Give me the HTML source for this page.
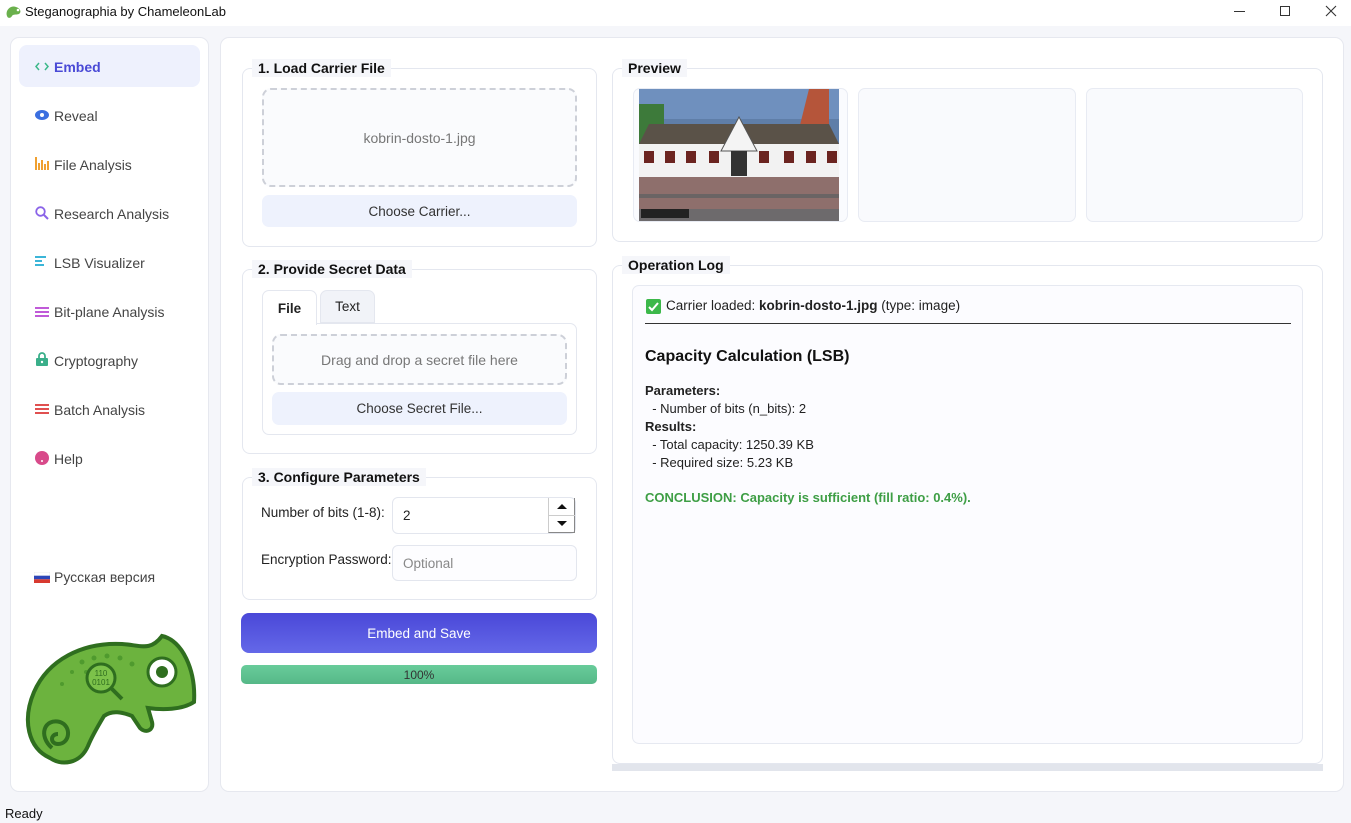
<!DOCTYPE html>
<html><head><meta charset="utf-8"><style>
*{box-sizing:border-box;margin:0;padding:0}
body{width:1351px;height:823px;background:#f5f6fa;font-family:"Segoe UI","Liberation Sans",sans-serif;font-size:13px;color:#222;position:relative;overflow:hidden}
.a{position:absolute}
.card{background:#fff;border:1px solid #e6e8ef;border-radius:9px}
.grp{border:1px solid #e4e7ef;border-radius:8px;background:#fff}
.gt{position:absolute;background:#f5f6fa;font-weight:bold;font-size:14px;padding:0 6px;line-height:18px;color:#111}
.nav{position:absolute;left:54px;font-size:14px;color:#444;line-height:20px}
.ic{position:absolute;left:35px}
.dz{border:2px dashed #cdd0d8;border-radius:9px;background:#fafbfd;color:#777;display:flex;align-items:center;justify-content:center;font-size:14px}
.btn{background:#eef2fd;border-radius:7px;display:flex;align-items:center;justify-content:center;font-size:13.5px;color:#333}
.inp{border:1px solid #e3e6ee;border-radius:6px;background:#fff;font-size:13.5px;display:flex;align-items:center;padding-left:10px}
</style></head><body>
<div class="a" style="left:0;top:0;width:1351px;height:26px;background:#fff"></div>
<svg class="a" style="left:5px;top:4px" width="17" height="15" viewBox="0 0 17 15"><path d="M2 12 C0 6 6 1 11 3 C15 4 17 8 14 10 C11 11 8 10 7 12 C6 14 3 15 2 12Z" fill="#6ab04c"/><circle cx="13" cy="6" r="1.3" fill="#fff"/></svg>
<div class="a" style="left:25px;top:4px;font-size:13px;color:#111">Steganographia by ChameleonLab</div>
<div class="a" style="left:1234px;top:11px;width:11px;height:1px;background:#333"></div>
<div class="a" style="left:1280px;top:6px;width:10px;height:10px;border:1px solid #333"></div>
<svg class="a" style="left:1325px;top:5px" width="12" height="12"><path d="M1 1L11 11M11 1L1 11" stroke="#333" stroke-width="1.1"/></svg>

<div class="a card" style="left:10px;top:37px;width:199px;height:755px"></div>
<div class="a" style="left:19px;top:45px;width:181px;height:42px;background:#eef1fd;border-radius:8px"></div>
<svg class="ic" style="top:62px" width="14" height="9"><path d="M4 1L1 4.5L4 8M10 1L13 4.5L10 8" fill="none" stroke="#3cb88a" stroke-width="1.5"/></svg>
<div class="nav" style="top:57px;color:#4a4ad6;font-weight:bold">Embed</div>
<svg class="ic" style="top:110px" width="14" height="10"><ellipse cx="7" cy="5" rx="7" ry="5" fill="#3b6fe0"/><circle cx="7" cy="5" r="2" fill="#fff"/></svg>
<div class="nav" style="top:106px">Reveal</div>
<svg class="ic" style="top:157px" width="14" height="13"><g fill="#f0a030"><rect x="0" y="0" width="2" height="13"/><rect x="3" y="6" width="2" height="7"/><rect x="6" y="3" width="2" height="10"/><rect x="9" y="7" width="2" height="6"/><rect x="12" y="4" width="2" height="9"/></g></svg>
<div class="nav" style="top:155px">File Analysis</div>
<svg class="ic" style="top:206px" width="14" height="14"><circle cx="5.5" cy="5.5" r="4.3" fill="none" stroke="#8a63e8" stroke-width="1.8"/><path d="M8.5 8.5L13 13" stroke="#8a63e8" stroke-width="2"/></svg>
<div class="nav" style="top:204px">Research Analysis</div>
<svg class="ic" style="top:256px" width="12" height="12"><g fill="#3bb5d8"><rect x="0" y="0" width="11" height="2"/><rect x="0" y="4" width="7" height="2"/><rect x="0" y="8" width="9" height="2"/></g></svg>
<div class="nav" style="top:253px">LSB Visualizer</div>
<svg class="ic" style="top:307px" width="14" height="10"><g fill="#c05ad8"><rect y="0" width="14" height="2"/><rect y="4" width="14" height="2"/><rect y="8" width="14" height="2"/></g></svg>
<div class="nav" style="top:302px">Bit-plane Analysis</div>
<svg class="ic" style="top:352px;left:36px" width="12" height="14"><path d="M3 6V4a3 3 0 0 1 6 0v2" fill="none" stroke="#3aaf8a" stroke-width="1.8"/><rect x="0" y="6" width="12" height="8" rx="1" fill="#3aaf8a"/><circle cx="6" cy="10" r="1.2" fill="#fff"/></svg>
<div class="nav" style="top:351px">Cryptography</div>
<svg class="ic" style="top:404px" width="14" height="10"><g fill="#e05050"><rect y="0" width="14" height="2"/><rect y="4" width="14" height="2"/><rect y="8" width="14" height="2"/></g></svg>
<div class="nav" style="top:400px">Batch Analysis</div>
<svg class="ic" style="top:451px" width="14" height="14"><circle cx="7" cy="7" r="7" fill="#d84a8a"/><circle cx="7" cy="10" r="1" fill="#fff"/></svg>
<div class="nav" style="top:449px">Help</div>
<svg class="a" style="left:34px;top:572px" width="16" height="11"><rect width="16" height="4" fill="#fff" stroke="#ddd" stroke-width=".5"/><rect y="3.7" width="16" height="3.6" fill="#2d46b8"/><rect y="7.3" width="16" height="3.7" fill="#d83a30"/></svg>
<div class="nav" style="top:567px">Русская версия</div>
<svg class="a" style="left:22px;top:630px" width="176" height="136" viewBox="0 0 176 136">
<path d="M28 128 C6 118 0 90 12 62 C26 30 60 12 100 14 C118 15 128 22 140 6 C160 10 174 40 172 72 C160 80 140 80 126 78 L130 92 C132 100 124 104 118 98 L110 86 C100 82 90 80 82 86 C76 96 70 106 66 116 C58 134 40 136 28 128Z" fill="#6cb33e" stroke="#2f6e1f" stroke-width="4"/>
<path d="M30 118 C16 106 22 88 38 92 C50 96 48 114 36 114 C28 114 28 104 36 104" fill="none" stroke="#2f6e1f" stroke-width="4"/>
<g fill="#4f9a2e"><circle cx="60" cy="32" r="2.5"/><circle cx="72" cy="28" r="2.5"/><circle cx="85" cy="26" r="2.5"/><circle cx="98" cy="28" r="2.5"/><circle cx="50" cy="42" r="2"/><circle cx="64" cy="42" r="2"/><circle cx="40" cy="54" r="2"/><circle cx="110" cy="34" r="2.5"/></g>
<circle cx="140" cy="42" r="14" fill="#fff" stroke="#2f6e1f" stroke-width="3"/><circle cx="140" cy="42" r="6" fill="#2f6e1f"/>
<circle cx="79" cy="48" r="14" fill="#7cc24a" stroke="#2f6e1f" stroke-width="3"/><path d="M89 58L100 69" stroke="#2f6e1f" stroke-width="4"/>
<text x="79" y="46" font-size="8" text-anchor="middle" fill="#2f6e1f" font-family="Liberation Sans">110</text><text x="79" y="55" font-size="8" text-anchor="middle" fill="#2f6e1f" font-family="Liberation Sans">0101</text>
</svg>

<div class="a card" style="left:220px;top:37px;width:1124px;height:755px"></div>

<div class="a grp" style="left:242px;top:68px;width:355px;height:179px"></div>
<div class="gt" style="left:252px;top:59px">1. Load Carrier File</div>
<div class="a dz" style="left:262px;top:88px;width:315px;height:99px">kobrin-dosto-1.jpg</div>
<div class="a btn" style="left:262px;top:195px;width:315px;height:32px">Choose Carrier...</div>

<div class="a grp" style="left:242px;top:269px;width:355px;height:185px"></div>
<div class="gt" style="left:252px;top:260px">2. Provide Secret Data</div>
<div class="a" style="left:262px;top:290px;width:55px;height:35px;background:#fff;border:1px solid #e4e7ef;border-bottom:none;border-radius:7px 7px 0 0;z-index:2;font-weight:bold;font-size:13.5px;display:flex;align-items:center;justify-content:center">File</div>
<div class="a" style="left:320px;top:290px;width:55px;height:33px;background:#f1f3f8;border:1px solid #e4e7ef;border-radius:7px 7px 0 0;font-size:13.5px;display:flex;align-items:center;justify-content:center">Text</div>
<div class="a" style="left:262px;top:323px;width:315px;height:112px;border:1px solid #e4e7ef;border-radius:0 7px 7px 7px;background:#fff"></div>
<div class="a dz" style="left:272px;top:334px;width:295px;height:51px">Drag and drop a secret file here</div>
<div class="a btn" style="left:272px;top:392px;width:295px;height:33px">Choose Secret File...</div>

<div class="a grp" style="left:242px;top:477px;width:355px;height:123px"></div>
<div class="gt" style="left:252px;top:468px">3. Configure Parameters</div>
<div class="a" style="left:261px;top:505px;font-size:13.5px">Number of bits (1-8):</div>
<div class="a inp" style="left:392px;top:497px;width:184px;height:37px">2</div>
<div class="a" style="left:548px;top:498px;width:27px;height:35px;border-left:1px solid #ccc;border-right:1px solid #888;border-bottom:1px solid #888"></div>
<div class="a" style="left:548px;top:515px;width:27px;height:1px;background:#ccc"></div>
<svg class="a" style="left:556px;top:503px" width="12" height="26"><path d="M1 6L6 1L11 6Z M1 18L11 18L6 23Z" fill="#111"/></svg>
<div class="a" style="left:261px;top:552px;font-size:13.5px">Encryption Password:</div>
<div class="a inp" style="left:392px;top:545px;width:185px;height:36px;color:#888;background:#fdfdff">Optional</div>

<div class="a" style="left:241px;top:613px;width:356px;height:40px;border-radius:8px;background:linear-gradient(#4a48d8,#6468e8);color:#fff;font-size:13.5px;display:flex;align-items:center;justify-content:center">Embed and Save</div>
<div class="a" style="left:241px;top:665px;width:356px;height:19px;border-radius:5px;background:linear-gradient(#68cc9a,#56b888);color:#333;font-size:12px;display:flex;align-items:center;justify-content:center">100%</div>

<div class="a grp" style="left:612px;top:68px;width:711px;height:174px"></div>
<div class="gt" style="left:622px;top:59px">Preview</div>
<div class="a" style="left:633px;top:88px;width:215px;height:134px;border:1px solid #e8ebf3;border-radius:7px;background:#fafbfe"></div>
<svg class="a" style="left:639px;top:89px" width="200" height="132" viewBox="0 0 200 132">
<rect width="200" height="132" fill="#5f7ea8"/><rect y="0" width="200" height="30" fill="#6f90be"/>
<rect x="0" y="15" width="25" height="40" fill="#3d7a3a"/>
<path d="M170 0H190V40H160Z" fill="#b5553a"/>
<path d="M0 55 L10 35 H190 L200 55Z" fill="#5a5248"/>
<rect x="0" y="55" width="200" height="35" fill="#f2f2f2"/><path d="M100 28L82 62H118Z" fill="#f4f4f4" stroke="#555"/>
<g fill="#6b2420"><rect x="5" y="62" width="10" height="12"/><rect x="26" y="62" width="10" height="12"/><rect x="47" y="62" width="10" height="12"/><rect x="70" y="62" width="10" height="12"/><rect x="120" y="62" width="10" height="12"/><rect x="145" y="62" width="10" height="12"/><rect x="167" y="62" width="10" height="12"/><rect x="188" y="62" width="10" height="12"/></g>
<rect x="92" y="62" width="16" height="25" fill="#333"/>
<rect y="88" width="200" height="44" fill="#8e6f6c"/><rect y="105" width="200" height="4" fill="#6a6464"/><rect y="120" width="200" height="12" fill="#6d6a6c"/>
<rect x="2" y="120" width="48" height="9" fill="#222"/>
</svg>
<div class="a" style="left:858px;top:88px;width:218px;height:134px;border:1px solid #e8ebf3;border-radius:7px;background:#f9fafd"></div>
<div class="a" style="left:1086px;top:88px;width:217px;height:134px;border:1px solid #e8ebf3;border-radius:7px;background:#f9fafd"></div>

<div class="a grp" style="left:612px;top:265px;width:711px;height:499px"></div>
<div class="gt" style="left:622px;top:256px">Operation Log</div>
<div class="a" style="left:632px;top:285px;width:671px;height:459px;border:1px solid #e6e9f1;border-radius:7px;background:#fcfcff"></div>
<svg class="a" style="left:646px;top:299px" width="15" height="15"><rect width="15" height="15" rx="2" fill="#3cb84a"/><path d="M3 8L6 11L12 4" fill="none" stroke="#fff" stroke-width="2"/></svg>
<div class="a" style="left:666px;top:298px;font-size:13.5px">Carrier loaded: <b>kobrin-dosto-1.jpg</b> (type: image)</div>
<div class="a" style="left:645px;top:323px;width:646px;height:1px;background:#333"></div>
<div class="a" style="left:645px;top:348px;font-size:16px;font-weight:bold;color:#111">Capacity Calculation (LSB)</div>
<div class="a" style="left:645px;top:382px;font-size:13px;line-height:18px"><b>Parameters:</b><br>&nbsp;&nbsp;- Number of bits (n_bits): 2<br><b>Results:</b><br>&nbsp;&nbsp;- Total capacity: 1250.39 KB<br>&nbsp;&nbsp;- Required size: 5.23 KB</div>
<div class="a" style="left:645px;top:490px;font-size:13px;font-weight:bold;color:#3e9e45">CONCLUSION: Capacity is sufficient (fill ratio: 0.4%).</div>
<div class="a" style="left:612px;top:764px;width:711px;height:7px;background:#e2e5ec"></div>

<div class="a" style="left:5px;top:806px;font-size:13px;color:#111">Ready</div>
</body></html>
